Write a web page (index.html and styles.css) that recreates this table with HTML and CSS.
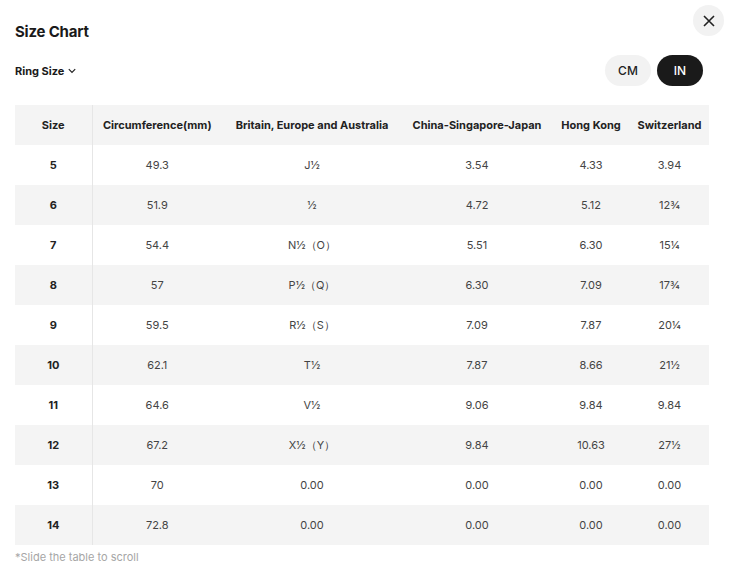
FILE: index.html
```html
<!DOCTYPE html>
<html lang="en">
<head>
<meta charset="utf-8">
<title>Size Chart</title>
<link rel="stylesheet" href="styles.css">
</head>
<body>
<div class="modal">
  <button class="close" aria-label="Close">
    <svg width="12" height="12" viewBox="0 0 12 12"><path d="M1 1L11 11M11 1L1 11" stroke="#222" stroke-width="1.6" fill="none"/></svg>
  </button>
  <h1 class="title">Size Chart</h1>
  <div class="toolbar">
    <div class="select">Ring Size
      <svg width="8" height="6" viewBox="0 0 8 6"><path d="M0.8 1.2L4 4.4L7.2 1.2" stroke="#222" stroke-width="1.2" fill="none"/></svg>
    </div>
    <div class="units">
      <button class="unit">CM</button>
      <button class="unit active">IN</button>
    </div>
  </div>
  <div class="table-wrap">
    <table class="chart">
      <colgroup>
        <col class="c1"><col class="c2"><col class="c3"><col class="c4"><col class="c5"><col class="c6">
      </colgroup>
      <thead>
        <tr><th class="first">Size</th><th>Circumference(mm)</th><th>Britain, Europe and Australia</th><th>China-Singapore-Japan</th><th>Hong Kong</th><th>Switzerland</th></tr>
      </thead>
      <tbody>
        <tr><td class="first">5</td><td>49.3</td><td>J½</td><td>3.54</td><td>4.33</td><td>3.94</td></tr>
        <tr><td class="first">6</td><td>51.9</td><td>½</td><td>4.72</td><td>5.12</td><td>12¾</td></tr>
        <tr><td class="first">7</td><td>54.4</td><td>N½（O）</td><td>5.51</td><td>6.30</td><td>15¼</td></tr>
        <tr><td class="first">8</td><td>57</td><td>P½（Q）</td><td>6.30</td><td>7.09</td><td>17¾</td></tr>
        <tr><td class="first">9</td><td>59.5</td><td>R½（S）</td><td>7.09</td><td>7.87</td><td>20¼</td></tr>
        <tr><td class="first">10</td><td>62.1</td><td>T½</td><td>7.87</td><td>8.66</td><td>21½</td></tr>
        <tr><td class="first">11</td><td>64.6</td><td>V½</td><td>9.06</td><td>9.84</td><td>9.84</td></tr>
        <tr><td class="first">12</td><td>67.2</td><td>X½（Y）</td><td>9.84</td><td>10.63</td><td>27½</td></tr>
        <tr><td class="first">13</td><td>70</td><td>0.00</td><td>0.00</td><td>0.00</td><td>0.00</td></tr>
        <tr><td class="first">14</td><td>72.8</td><td>0.00</td><td>0.00</td><td>0.00</td><td>0.00</td></tr>
      </tbody>
    </table>
  </div>
  <p class="hint">*Slide the table to scroll</p>
</div>
</body>
</html>
```
FILE: styles.css
```css
* { box-sizing: border-box; }
html, body { margin: 0; background: #fff; }
body {
  font-family: Inter, "Noto Sans", sans-serif;
  color: #222;
}
.modal {
  position: relative;
  padding: 22px 15px 0 15px;
}
.close {
  position: absolute;
  top: 5px;
  right: 12px;
  width: 31px;
  height: 31px;
  border-radius: 50%;
  border: none;
  background: #f2f2f2;
  display: flex;
  align-items: center;
  justify-content: center;
  padding: 0;
}
.title {
  margin: 0;
  font-size: 15px;
  font-weight: 700;
  line-height: 20px;
  color: #1a1a1a;
  letter-spacing: -0.2px;
}
.toolbar {
  display: flex;
  align-items: center;
  justify-content: space-between;
  margin-top: 13px;
  padding-right: 18px;
}
.select {
  display: flex;
  align-items: center;
  gap: 4px;
  font-size: 11px;
  font-weight: 700;
  color: #1a1a1a;
}
.units { display: flex; gap: 6px; }
.unit {
  width: 46px;
  height: 31px;
  border-radius: 16px;
  border: none;
  background: #f2f2f2;
  font-family: inherit;
  font-size: 12px;
  font-weight: 500;
  color: #222;
  padding: 0;
}
.unit.active { background: #1a1a1a; color: #fff; }
.table-wrap {
  margin-top: 19px;
  overflow-x: auto;
}
.chart {
  border-collapse: collapse;
  table-layout: fixed;
  width: 694px;
}
.c1 { width: 77px; }
.c2 { width: 130px; }
.c3 { width: 180px; }
.c4 { width: 150px; }
.c5 { width: 78px; }
.c6 { width: 79px; }
.chart th, .chart td {
  height: 40px;
  padding: 0 4px;
  text-align: center;
  white-space: nowrap;
  font-size: 11px;
}
.chart th { font-weight: 700; color: #222; }
.chart td { color: #444; font-weight: 400; }
.chart td.first { font-weight: 700; color: #222; }
.chart .first { border-right: 1px solid #e6e6e6; }
.chart thead tr { background: #f4f4f4; }
.chart tbody tr:nth-child(even) { background: #f4f4f4; }
.hint {
  margin: 5px 0 0 0;
  font-size: 11px;
  color: #a6a6a6;
  line-height: 14px;
}
```
